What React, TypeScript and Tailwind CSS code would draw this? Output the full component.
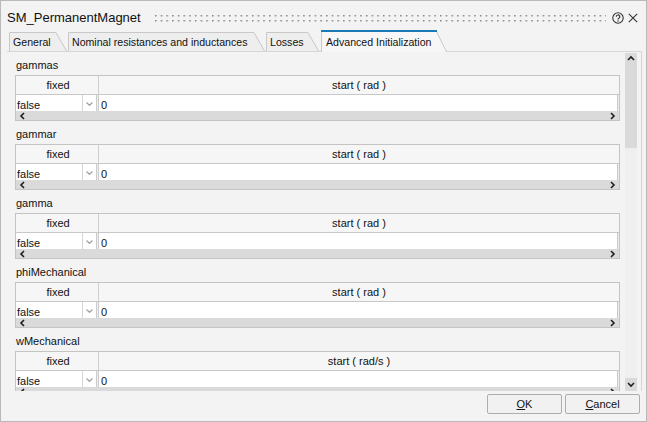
import React from "react";

const groups = [
  { name: "gammas", unit: "start ( rad )" },
  { name: "gammar", unit: "start ( rad )" },
  { name: "gamma", unit: "start ( rad )" },
  { name: "phiMechanical", unit: "start ( rad )" },
  { name: "wMechanical", unit: "start ( rad/s )" },
];

function Chevron({ dir, color = "#1f1f1f", w = 1.6 }: { dir: "up" | "down" | "left" | "right"; color?: string; w?: number }) {
  const pts =
    dir === "up"
      ? "1,5 4,2 7,5"
      : dir === "down"
      ? "1,2 4,5 7,2"
      : dir === "left"
      ? "5,1 2,4 5,7"
      : "2,1 5,4 2,7";
  return (
    <svg width="8" height="8" viewBox="0 0 8 8" className="block">
      <polyline points={pts} fill="none" stroke={color} strokeWidth={w} />
    </svg>
  );
}

function Tab({ label, w, active, cls }: { label: string; w: number; active?: boolean; cls: string }) {
  const h = active ? 22 : 19;
  return (
    <div className={`relative shrink-0 ${cls} ${active ? "h-[22px] -mb-px z-10" : "h-[19px]"}`}>
      <svg width={w} height={h} className="absolute left-0 top-0">
        <polygon
          points={`0.5,${h} 0.5,0.5 ${w - 11},0.5 ${w - 0.5},${h}`}
          fill={active ? "#f7f7f7" : "#eeeeee"}
          stroke="none"
        />
        <path
          d={`M0.5,${h} V0.5 H${w - 11} L${w - 0.5},${h}`}
          fill="none"
          stroke="#c8c8c8"
          strokeWidth="1"
        />
        {active && <rect x="0" y="0" width={w - 10} height="2" fill="#1a7ab6" />}
      </svg>
      <div className={`relative flex items-center h-full whitespace-nowrap text-[10.6px] ${active ? "pl-[5px] pt-[4px]" : "pl-[4px] pt-[3px]"}`}>
        {label}
      </div>
    </div>
  );
}

function Group({ name, unit }: { name: string; unit: string }) {
  return (
    <div className="flex flex-col shrink-0 mb-[4px]">
      <div className="h-[19px] flex items-center pl-[1px]">{name}</div>
      <div className="w-[605px] h-[46px] border border-[#c4c4c4] flex flex-col shrink-0">
        <div className="h-[19px] flex bg-[#f6f6f6] border-b border-[#c8c8c8] shrink-0">
          <div className="w-[83px] border-r border-[#d0d0d0] flex items-center justify-center pl-[2px]">fixed</div>
          <div className="flex-1 flex items-center justify-center">{unit}</div>
        </div>
        <div className="h-[16px] flex bg-white overflow-hidden shrink-0">
          <div className="w-[67px] border-r border-[#d6d6d6] pl-[1px] pt-[4px] leading-[13px]">false</div>
          <div className="w-[13px] flex items-center justify-center pt-[1px]">
            <svg width="7" height="4" viewBox="0 0 7 4" className="block">
              <polyline points="0.5,0.5 3.5,3.3 6.5,0.5" fill="none" stroke="#a0a0a0" strokeWidth="1.2" />
            </svg>
          </div>
          <div className="w-[3px] border-x border-[#cccccc] bg-[#eeeeee]" />
          <div className="flex-1 border-r border-[#c8c8c8] pl-[2px] pt-[4px] leading-[13px]">0</div>
          <div className="w-[1px] bg-[#eeeeee]" />
        </div>
        <div className="flex-1 bg-[#dadada] flex items-center justify-between pl-[3px] pr-[2px]">
          <Chevron dir="left" />
          <Chevron dir="right" />
        </div>
      </div>
    </div>
  );
}

export default function App() {
  return (
    <div className="w-[647px] h-[422px] bg-[#f3f3f3] border border-[#b9b9b9] flex flex-col overflow-hidden text-[11px] text-[#111] font-['Liberation_Sans',Arial,sans-serif]">
      {/* title bar */}
      <div className="h-[30px] shrink-0 flex items-center pt-[4px] pl-[6px] pr-[8px]">
        <div className="text-[13px] whitespace-nowrap">SM_PermanentMagnet</div>
        <div className="flex-1 ml-[14px] mr-[6px] h-[7px]">
          <svg width="100%" height="7" className="block">
            <defs>
              <pattern id="grip" width="5.7" height="5" patternUnits="userSpaceOnUse">
                <rect x="0" y="0" width="1.5" height="1.5" fill="#858585" />
              </pattern>
            </defs>
            <rect x="0" y="0" width="100%" height="7" fill="url(#grip)" />
          </svg>
        </div>
        <svg width="12" height="12" viewBox="0 0 12 12" className="block shrink-0">
          <circle cx="6" cy="6" r="5.2" fill="none" stroke="#333" strokeWidth="1.1" />
          <path d="M4.3 4.7a1.75 1.75 0 1 1 2.5 1.6c-.55.3-.8.6-.8 1.2" fill="none" stroke="#333" strokeWidth="1.2" />
          <circle cx="6" cy="9" r="0.75" fill="#333" />
        </svg>
        <svg width="10" height="10" viewBox="0 0 10 10" className="block shrink-0 ml-[4px]">
          <path d="M0.8 0.8 L9.2 9.2 M9.2 0.8 L0.8 9.2" stroke="#333" strokeWidth="1.1" />
        </svg>
      </div>

      {/* tabs */}
      <div className="h-[20px] shrink-0 flex items-end pl-[8px] relative z-10">
        <Tab label="General" w={58} cls="w-[58px]" />
        <div className="w-[1px]" />
        <Tab label="Nominal resistances and inductances" w={197} cls="w-[197px]" />
        <div className="w-[1px]" />
        <Tab label="Losses" w={53} cls="w-[53px]" />
        <div className="w-[2px]" />
        <Tab label="Advanced Initialization" w={126} cls="w-[126px]" active />
      </div>

      {/* panel */}
      <div className="flex-1 min-h-0 ml-[6px] mr-[4px] border-t border-r border-[#d6d6d6] flex">
        <div className="flex-1 min-w-0 overflow-hidden pl-[8px] pt-[4px] flex flex-col">
          {groups.map((g) => (
            <Group key={g.name} name={g.name} unit={g.unit} />
          ))}
        </div>
        <div className="w-[12px] mr-[4px] mt-[1px] flex flex-col shrink-0">
          <div className="h-[95px] bg-[#dadada] flex justify-center pt-[2px]">
            <Chevron dir="up" />
          </div>
          <div className="flex-1 bg-[#efefef]" />
          <div className="h-[13px] bg-[#dadada] flex items-center justify-center">
            <Chevron dir="down" />
          </div>
        </div>
      </div>

      {/* buttons */}
      <div className="h-[30px] shrink-0 flex justify-end items-start pt-[3px] pr-[6px] gap-[3px]">
        <button className="w-[75px] h-[20px] border border-[#adadad] bg-[#f1f1f1] rounded-[2px] text-[11px] flex items-center justify-center">
          <span>
            <span className="underline">O</span>K
          </span>
        </button>
        <button className="w-[75px] h-[20px] border border-[#adadad] bg-[#f1f1f1] rounded-[2px] text-[11px] flex items-center justify-center">
          <span>
            <span className="underline">C</span>ancel
          </span>
        </button>
      </div>
    </div>
  );
}
